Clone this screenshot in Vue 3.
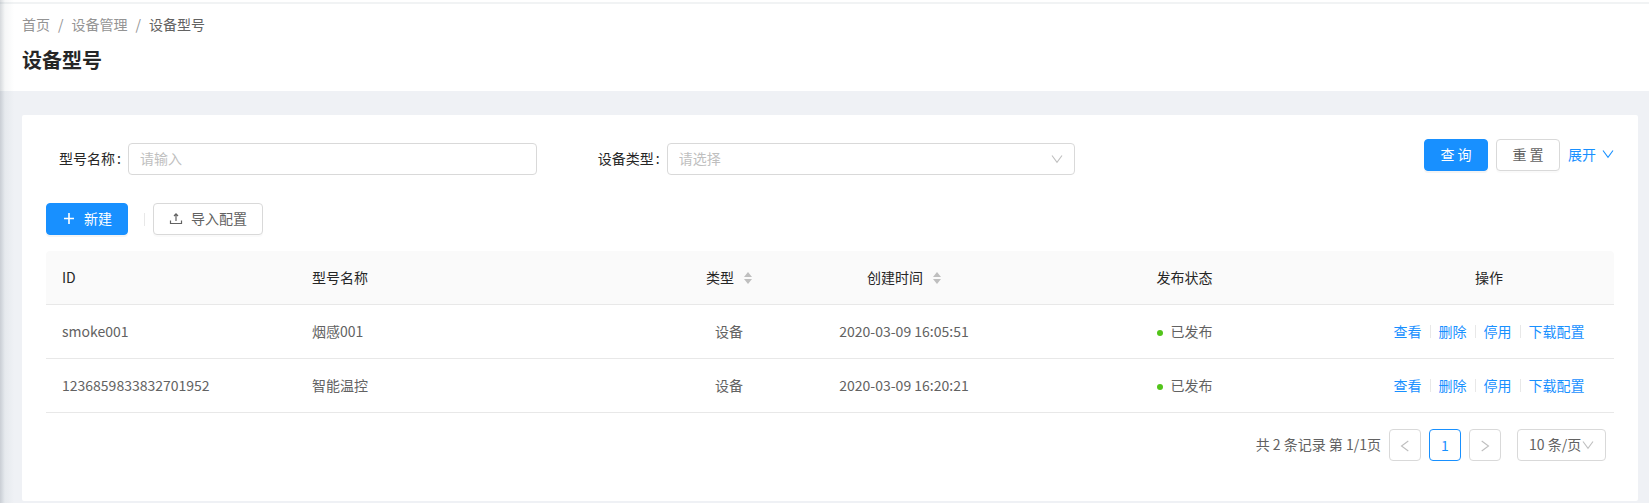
<script setup>
import { ref } from 'vue'

const modelName = ref('')
const deviceType = ref('')
const pageSize = ref('10')

const columns = [
  { key: 'id', title: 'ID', align: 'left' },
  { key: 'name', title: '型号名称', align: 'left' },
  { key: 'type', title: '类型', align: 'center', sortable: true },
  { key: 'created', title: '创建时间', align: 'center', sortable: true },
  { key: 'status', title: '发布状态', align: 'center' },
  { key: 'ops', title: '操作', align: 'center' },
]

const rows = [
  { id: 'smoke001', name: '烟感001', type: '设备', created: '2020-03-09 16:05:51', status: '已发布' },
  { id: '1236859833832701952', name: '智能温控', type: '设备', created: '2020-03-09 16:20:21', status: '已发布' },
]

const actions = ['查看', '删除', '停用', '下载配置']
</script>

<template>
  <div class="page">
    <header class="page-header">
      <nav class="breadcrumb" aria-label="面包屑">
        <a href="#">首页</a><span class="slash">/</span>
        <a href="#">设备管理</a><span class="slash">/</span>
        <span class="current">设备型号</span>
      </nav>
      <h1>设备型号</h1>
    </header>

    <main class="card">
      <form class="search" @submit.prevent>
        <div class="field">
          <label for="model-name">型号名称<span class="colon">:</span></label>
          <input id="model-name" v-model="modelName" type="text" placeholder="请输入" />
        </div>
        <div class="field">
          <label for="device-type">设备类型<span class="colon">:</span></label>
          <span class="select-wrap">
            <select id="device-type" v-model="deviceType" class="empty">
              <option value="">请选择</option>
              <option value="device">设备</option>
            </select>
            <svg class="chevron" viewBox="0 0 12 12" aria-hidden="true"><path d="M1 2.5 6 9.3 11 2.5" /></svg>
          </span>
        </div>
        <div class="search-actions">
          <button type="submit" class="btn primary">查 询</button>
          <button type="reset" class="btn">重 置</button>
          <a href="#" class="expand">展开<svg class="chevron" viewBox="0 0 12 12" aria-hidden="true"><path d="M1 2.5 6 9.3 11 2.5" /></svg></a>
        </div>
      </form>

      <div class="toolbar">
        <button type="button" class="btn primary">
          <svg class="icon" viewBox="0 0 14 14" aria-hidden="true"><path d="M7 2v11M2 7.5h10" stroke-width="1.6" /></svg>
          新建
        </button>
        <span class="divider"></span>
        <button type="button" class="btn">
          <svg class="icon" viewBox="0 0 14 14" aria-hidden="true"><path d="M1.5 9.5v3h11v-3M7 10V3M5 5 7 2.8 9 5" /></svg>
          导入配置
        </button>
      </div>

      <table>
        <colgroup>
          <col v-for="c in columns" :key="c.key" :class="'col-' + c.key" />
        </colgroup>
        <thead>
          <tr>
            <th v-for="c in columns" :key="c.key" :class="c.align" scope="col">
              {{ c.title }}<svg v-if="c.sortable" class="sorter" viewBox="0 0 8 12" aria-hidden="true"><path d="M4 0 8 5H0ZM4 12 8 7H0Z" /></svg>
            </th>
          </tr>
        </thead>
        <tbody>
          <tr v-for="r in rows" :key="r.id">
            <td>{{ r.id }}</td>
            <td>{{ r.name }}</td>
            <td class="center">{{ r.type }}</td>
            <td class="center">{{ r.created }}</td>
            <td class="center"><span class="status">{{ r.status }}</span></td>
            <td>
              <div class="ops">
                <a v-for="a in actions" :key="a" href="#">{{ a }}</a>
              </div>
            </td>
          </tr>
        </tbody>
      </table>

      <nav class="pagination" aria-label="分页">
        <span class="total">共 2 条记录 第 1/1页</span>
        <button type="button" class="pager" disabled aria-label="上一页">
          <svg class="chevron" viewBox="0 0 12 12" aria-hidden="true"><path d="M9.3 2 2.5 7 9.3 12" /></svg>
        </button>
        <button type="button" class="pager active">1</button>
        <button type="button" class="pager" disabled aria-label="下一页">
          <svg class="chevron" viewBox="0 0 12 12" aria-hidden="true"><path d="M2.7 2 9.5 7 2.7 12" /></svg>
        </button>
        <span class="select-wrap size">
          <select v-model="pageSize" aria-label="每页条数">
            <option value="10">10 条/页</option>
            <option value="20">20 条/页</option>
          </select>
          <svg class="chevron" viewBox="0 0 12 12" aria-hidden="true"><path d="M1 2.5 6 9.3 11 2.5" /></svg>
        </span>
      </nav>
    </main>
  </div>
</template>

<style>
body {
  background: #f0f2f5;
}
</style>

<style scoped>
.page {
  position: relative;
  min-height: 100vh;
  box-sizing: border-box;
  padding-top: 2px;
  background: linear-gradient(#fff 2px, #eff1f5 2px);
  color: #626262;
  font: 14px/21px "Noto Sans CJK SC", sans-serif;
}
.page::before {
  content: "";
  position: absolute;
  inset: 0 auto 0 0;
  width: 14px;
  background: linear-gradient(90deg, rgba(0, 21, 41, 0.16), rgba(0, 41, 51, 0.04) 35%, rgba(0, 41, 51, 0));
}
a {
  color: #1890ff;
  text-decoration: none;
}
.page-header {
  padding: 10px 22px 16px;
  border-top: 2px solid #f1f3f4;
  background: #fff;
}
.breadcrumb {
  display: flex;
  line-height: 20px;
}
.breadcrumb a,
.slash {
  color: #949494;
}
.slash {
  margin: 0 8px;
}
.current {
  color: #626262;
}
h1 {
  margin: 11px 0 0;
  color: #262626;
  font-size: 20px;
  line-height: 30px;
  font-weight: 700;
}
.card {
  margin: 24px 11px 0 22px;
  padding: 24px 24px 40px;
  border-radius: 2px;
  background: #fff;
}
.search {
  display: grid;
  grid-template-columns: 1fr 1fr 1fr;
  column-gap: 48px;
  align-items: start;
}
.field {
  display: flex;
  align-items: center;
  padding: 4px 0 0 12px;
}
label {
  box-sizing: border-box;
  flex: none;
  width: 70px;
  padding: 0 0 2px 1px;
  color: #262626;
}
.colon {
  margin-left: 2px;
}
.field input,
select {
  box-sizing: border-box;
  width: 100%;
  min-width: 0;
  height: 32px;
  margin: 0;
  padding: 0 11px 2px;
  border: 1px solid #d9d9d9;
  border-radius: 4px;
  background: #fff;
  color: inherit;
  font: inherit;
  appearance: none;
}
.field input::placeholder,
select.empty {
  color: #bfbfbf;
}
.select-wrap {
  position: relative;
  display: flex;
  flex: 1;
}
.chevron {
  width: 12px;
  height: 12px;
  fill: none;
  stroke: currentColor;
  stroke-width: 1.1;
}
.pager .chevron {
  overflow: visible;
}
.select-wrap .chevron {
  position: absolute;
  top: 10px;
  right: 12px;
  color: #bfbfbf;
  pointer-events: none;
}
.search-actions {
  display: flex;
  justify-content: flex-end;
  align-items: center;
  gap: 8px;
}
.expand {
  display: flex;
  align-items: center;
  gap: 6px;
  padding-bottom: 2px;
}
.btn {
  display: flex;
  justify-content: center;
  align-items: center;
  gap: 8px;
  box-sizing: border-box;
  min-width: 64px;
  height: 32px;
  padding: 0 15px 2px;
  border: 1px solid #d9d9d9;
  border-radius: 4px;
  background: #fff;
  box-shadow: 0 2px 0 rgba(0, 0, 0, 0.02);
  color: #626262;
  font: inherit;
  white-space: nowrap;
}
.btn.primary {
  border-color: #1890ff;
  background: #1890ff;
  box-shadow: 0 2px 0 rgba(0, 0, 0, 0.045);
  color: #fff;
}
.icon {
  width: 14px;
  height: 14px;
  fill: none;
  stroke: currentColor;
  stroke-width: 1.2;
}
.toolbar {
  display: flex;
  align-items: center;
  gap: 8px;
  margin: 28px 0 16px;
}
.divider {
  width: 1px;
  height: 13px;
  margin-left: 8px;
  background: #e8e8e8;
}
table {
  width: 100%;
  border-collapse: separate;
  border-spacing: 0;
  table-layout: fixed;
}
.col-id,
.col-ops {
  width: 250px;
}
.col-type {
  width: 148px;
}
.col-created {
  width: 202px;
}
th,
td {
  padding: 16px;
  border-bottom: 1px solid #e8e8e8;
  text-align: left;
}
th {
  background: #fafafa;
  color: #262626;
  font-weight: 400;
}
th:first-child {
  border-top-left-radius: 4px;
}
th:last-child {
  border-top-right-radius: 4px;
}
.center {
  text-align: center;
}
.sorter {
  width: 8px;
  height: 12px;
  margin-left: 10px;
  vertical-align: -1px;
  fill: #bfbfbf;
}
.status::before {
  content: "";
  display: inline-block;
  width: 6px;
  height: 6px;
  margin-right: 8px;
  border-radius: 50%;
  background: #52c41a;
  vertical-align: 1px;
}
.ops {
  display: flex;
  justify-content: center;
  align-items: center;
  white-space: nowrap;
}
.ops a + a {
  display: flex;
  align-items: center;
}
.ops a + a::before {
  content: "";
  width: 1px;
  height: 13px;
  margin: 0 8px;
  background: #e8e8e8;
}
.pagination {
  display: flex;
  justify-content: flex-end;
  align-items: center;
  gap: 8px;
  margin: 16px 8px 0 0;
}
.total {
  padding-bottom: 2px;
}
.pager {
  display: flex;
  justify-content: center;
  align-items: center;
  width: 32px;
  height: 32px;
  padding: 0;
  border: 1px solid #d9d9d9;
  border-radius: 4px;
  background: #fff;
  color: #bfbfbf;
  font: inherit;
}
.pager.active {
  border-color: #1890ff;
  color: #1890ff;
}
.select-wrap.size {
  flex: none;
  width: 89px;
  margin-left: 8px;
}
</style>
